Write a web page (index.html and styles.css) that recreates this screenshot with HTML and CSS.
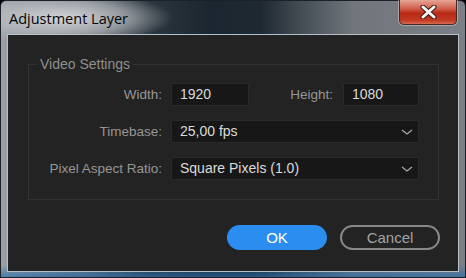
FILE: index.html
```html
<!DOCTYPE html>
<html lang="en">
<head>
    <meta charset="UTF-8">
    <title>Adjustment Layer</title>
    <link rel="stylesheet" href="styles.css">
</head>
<body>
    <div class="window">
        <div class="titlebar">
            <span class="title">Adjustment Layer</span>
            <button class="close" aria-label="Close">
                <svg width="17" height="14" viewBox="0 0 17 14">
                    <path d="M3 2 L14 12 M14 2 L3 12" stroke="#3a1a14" stroke-width="5" stroke-linecap="round"/>
                    <path d="M3 2 L14 12 M14 2 L3 12" stroke="#f4f4f4" stroke-width="3" stroke-linecap="round"/>
                </svg>
            </button>
        </div>

        <div class="content">
            <fieldset class="group">
                <legend>Video Settings</legend>
                <div class="group-body">
                    <div class="row">
                        <label class="label">Width:</label>
                        <div class="pair">
                            <div class="input width-input">1920</div>
                            <label class="label pair-label">Height:</label>
                            <div class="input height-input">1080</div>
                        </div>
                    </div>
                    <div class="row">
                        <label class="label">Timebase:</label>
                        <div class="input select">
                            <span>25,00 fps</span>
                            <svg class="chevron" width="12" height="6" viewBox="0 0 12 6">
                                <polyline points="1,1 6,5 11,1" fill="none" stroke="#a8a8a8" stroke-width="1.3"/>
                            </svg>
                        </div>
                    </div>
                    <div class="row">
                        <label class="label">Pixel Aspect Ratio:</label>
                        <div class="input select">
                            <span>Square Pixels (1.0)</span>
                            <svg class="chevron" width="12" height="6" viewBox="0 0 12 6">
                                <polyline points="1,1 6,5 11,1" fill="none" stroke="#a8a8a8" stroke-width="1.3"/>
                            </svg>
                        </div>
                    </div>
                </div>
            </fieldset>

            <div class="actions">
                <button class="btn btn-ok">OK</button>
                <button class="btn btn-cancel">Cancel</button>
            </div>
        </div>
    </div>
</body>
</html>
```

FILE: styles.css
```css
body {
    margin: 0;
    background: #000;
    font-family: "Liberation Sans", Arial, sans-serif;
}
.window {
    width: 466px;
    height: 278px;
    box-sizing: border-box;
    border: 1px solid #1b2127;
    border-radius: 6px 6px 0 0;
    display: flex;
    flex-direction: column;
    background:
        radial-gradient(ellipse 110px 26px at 62px 17px, rgba(214, 216, 219, 0.95), rgba(190, 194, 198, 0.6) 60%, rgba(160, 165, 170, 0) 100%),
        linear-gradient(to top, rgba(40, 110, 170, 0.7) 0, rgba(40, 110, 170, 0) 12px),
        linear-gradient(90deg, #9aa0a6 0, #6c737a 18%, #2c363f 32%, #1c2630 45%, #1f2932 56%, #4a5259 66%, #70767c 76%, #7b8086 100%);
}
.titlebar {
    height: 33px;
    display: flex;
    align-items: flex-start;
    justify-content: space-between;
}
.title {
    margin: 8px 0 0 8px;
    font-family: "Open Sans", "Liberation Sans", sans-serif;
    font-size: 14.5px;
    line-height: 20px;
    color: #050505;
}
.close {
    margin: -1px 8px 0 0;
    width: 58px;
    height: 25px;
    padding: 0;
    border: 1px solid #4a2520;
    border-top: none;
    border-radius: 0 0 5px 5px;
    box-shadow: 0 0 0 1px rgba(220, 225, 230, 0.45);
    background: linear-gradient(#e6a597 0, #d0624d 35%, #b82a14 55%, #c23a22 85%, #d86a55 100%);
    display: flex;
    align-items: center;
    justify-content: center;
}
.content {
    flex: 1;
    margin: 0 6px 5px;
    border: 1px solid #b6c0c8;
    background: #232323;
    display: flex;
    flex-direction: column;
}
.group {
    margin: 21px 19px 0 20px;
    padding: 0;
    border: 1px solid #323232;
    min-inline-size: 0;
}
.group legend {
    margin-left: 8px;
    padding: 0 3px;
    font-size: 14px;
    line-height: 16px;
    color: #8f8f8f;
}
.group-body {
    padding: 11px 19px 19px;
    display: flex;
    flex-direction: column;
    gap: 14px;
}
.row {
    display: flex;
    align-items: center;
    gap: 9px;
}
.label {
    flex-shrink: 0;
    width: 114px;
    text-align: right;
    white-space: nowrap;
    font-size: 13.5px;
    color: #969696;
}
.pair {
    flex: 1;
    display: flex;
    align-items: center;
    gap: 10px;
}
.pair .pair-label {
    flex: 1;
    width: auto;
}
.input {
    box-sizing: border-box;
    height: 23px;
    padding: 0 8px;
    background: #171717;
    border: 1px solid #2a2a2a;
    border-radius: 2px;
    font-size: 14px;
    line-height: 21px;
    color: #dadada;
}
.width-input {
    width: 78px;
}
.height-input {
    width: 76px;
}
.select {
    flex: 1;
    display: flex;
    align-items: center;
    justify-content: space-between;
    padding-right: 5px;
}
.actions {
    margin: 25px 18px 0 0;
    display: flex;
    justify-content: flex-end;
    gap: 13px;
}
.btn {
    width: 100px;
    height: 25px;
    border-radius: 13px;
    font-family: "Liberation Sans", Arial, sans-serif;
    font-size: 15px;
    padding: 0;
}
.btn-ok {
    border: none;
    background: #2b8df0;
    color: #fff;
}
.btn-cancel {
    border: 2px solid #888;
    background: transparent;
    color: #a2a2a2;
}
```
